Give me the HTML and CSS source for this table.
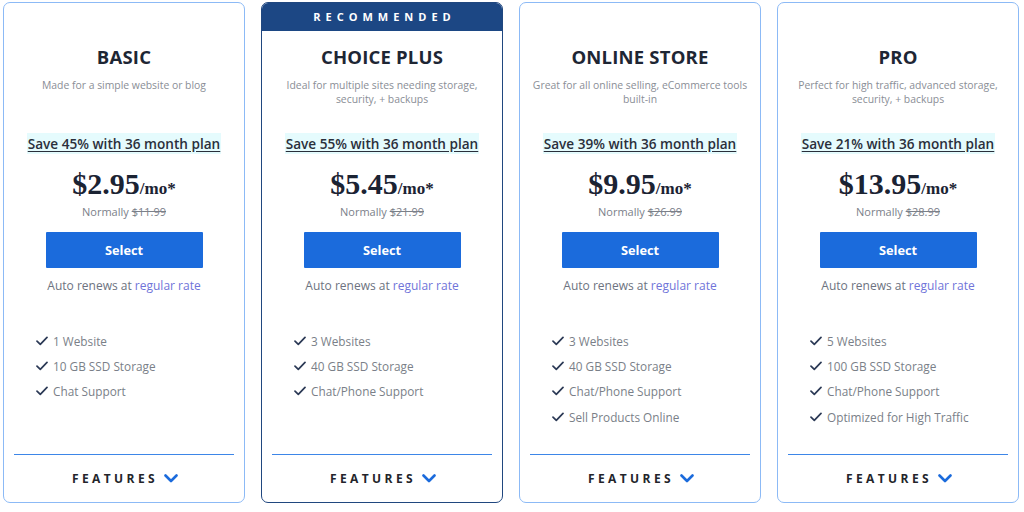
FILE: index.html
```html
<!DOCTYPE html>
<html lang="en">
<head>
<meta charset="utf-8">
<title>Plans</title>
<link rel="stylesheet" href="styles.css">
</head>
<body>
<svg width="0" height="0" style="position:absolute">
  <defs>
    <symbol id="check" viewBox="0 0 12 10"><path d="M1 5.2 L4.3 8.4 L11 1.4" fill="none" stroke="currentColor" stroke-width="1.7" stroke-linecap="round" stroke-linejoin="round"/></symbol>
    <symbol id="chev" viewBox="0 0 14 9"><path d="M1.5 1.5 L7 7 L12.5 1.5" fill="none" stroke="currentColor" stroke-width="2.6" stroke-linecap="round" stroke-linejoin="round"/></symbol>
  </defs>
</svg>
<main class="plans">
  <section class="card">
    <div class="ribbon"></div>
    <h2 class="title">BASIC</h2>
    <p class="desc">Made for a simple website or blog</p>
    <p class="save"><span>Save 45% with 36 month plan</span></p>
    <p class="price"><span class="amt">$2.95</span><span class="per">/mo*</span></p>
    <p class="normal">Normally <s>$11.99</s></p>
    <button class="select">Select</button>
    <p class="renew">Auto renews at <a>regular rate</a></p>
    <ul class="feats">
      <li><svg class="ck"><use href="#check"/></svg>1 Website</li>
      <li><svg class="ck"><use href="#check"/></svg>10 GB SSD Storage</li>
      <li><svg class="ck"><use href="#check"/></svg>Chat Support</li>
    </ul>
    <div class="foot"><span>FEATURES</span><svg class="chev"><use href="#chev"/></svg></div>
  </section>
  <section class="card rec">
    <div class="ribbon">RECOMMENDED</div>
    <h2 class="title">CHOICE PLUS</h2>
    <p class="desc">Ideal for multiple sites needing storage, security, + backups</p>
    <p class="save"><span>Save 55% with 36 month plan</span></p>
    <p class="price"><span class="amt">$5.45</span><span class="per">/mo*</span></p>
    <p class="normal">Normally <s>$21.99</s></p>
    <button class="select">Select</button>
    <p class="renew">Auto renews at <a>regular rate</a></p>
    <ul class="feats">
      <li><svg class="ck"><use href="#check"/></svg>3 Websites</li>
      <li><svg class="ck"><use href="#check"/></svg>40 GB SSD Storage</li>
      <li><svg class="ck"><use href="#check"/></svg>Chat/Phone Support</li>
    </ul>
    <div class="foot"><span>FEATURES</span><svg class="chev"><use href="#chev"/></svg></div>
  </section>
  <section class="card">
    <div class="ribbon"></div>
    <h2 class="title">ONLINE STORE</h2>
    <p class="desc">Great for all online selling, eCommerce tools built-in</p>
    <p class="save"><span>Save 39% with 36 month plan</span></p>
    <p class="price"><span class="amt">$9.95</span><span class="per">/mo*</span></p>
    <p class="normal">Normally <s>$26.99</s></p>
    <button class="select">Select</button>
    <p class="renew">Auto renews at <a>regular rate</a></p>
    <ul class="feats">
      <li><svg class="ck"><use href="#check"/></svg>3 Websites</li>
      <li><svg class="ck"><use href="#check"/></svg>40 GB SSD Storage</li>
      <li><svg class="ck"><use href="#check"/></svg>Chat/Phone Support</li>
      <li><svg class="ck"><use href="#check"/></svg>Sell Products Online</li>
    </ul>
    <div class="foot"><span>FEATURES</span><svg class="chev"><use href="#chev"/></svg></div>
  </section>
  <section class="card">
    <div class="ribbon"></div>
    <h2 class="title">PRO</h2>
    <p class="desc">Perfect for high traffic, advanced storage, security, + backups</p>
    <p class="save"><span>Save 21% with 36 month plan</span></p>
    <p class="price"><span class="amt">$13.95</span><span class="per">/mo*</span></p>
    <p class="normal">Normally <s>$28.99</s></p>
    <button class="select">Select</button>
    <p class="renew">Auto renews at <a>regular rate</a></p>
    <ul class="feats">
      <li><svg class="ck"><use href="#check"/></svg>5 Websites</li>
      <li><svg class="ck"><use href="#check"/></svg>100 GB SSD Storage</li>
      <li><svg class="ck"><use href="#check"/></svg>Chat/Phone Support</li>
      <li><svg class="ck"><use href="#check"/></svg>Optimized for High Traffic</li>
    </ul>
    <div class="foot"><span>FEATURES</span><svg class="chev"><use href="#chev"/></svg></div>
  </section>
</main>
</body>
</html>
```
FILE: styles.css
```css
* { box-sizing: border-box; }
html, body { margin: 0; padding: 0; background: #fff; }
body {
  font-family: "Open Sans", "Noto Sans", sans-serif;
  color: #1d2533;
}
.plans {
  display: flex;
  gap: 16px;
  padding: 2px 0 0 3px;
}
.card {
  width: 242px;
  height: 501px;
  border: 1px solid #8cbaf6;
  border-radius: 7px;
  display: flex;
  flex-direction: column;
  align-items: center;
  overflow: hidden;
}
.card.rec { border-color: #20477f; }
.ribbon {
  align-self: stretch;
  height: 28px;
  flex: none;
  color: #fff;
  font-weight: 700;
  font-size: 11px;
  letter-spacing: 5px;
  text-align: center;
  line-height: 28px;
  padding-left: 5px;
}
.rec .ribbon { background: #1c4784; }
.title {
  margin: 15px 0 0;
  font-size: 18.5px;
  line-height: 22px;
  font-weight: 700;
  color: #1e2634;
  letter-spacing: 0.2px;
}
.desc {
  margin: 10px 0 0;
  height: 28px;
  padding: 0 12px;
  font-size: 10.4px;
  line-height: 14px;
  color: #8a8e96;
  text-align: center;
}
.save {
  margin: 29px 0 0;
  font-size: 13.6px;
  line-height: 18px;
  font-weight: 600;
}
.save span {
  background: #e5fbfd;
  color: #2a2f3b;
  text-decoration: underline;
  text-underline-offset: 2px;
  padding: 1px 1px;
}
.price {
  margin: 16px 0 0;
  line-height: 30px;
  font-family: "Liberation Serif", serif;
  font-weight: 700;
  color: #1b2333;
}
.amt { font-size: 30px; }
.per { font-size: 17px; }
.normal {
  margin: 0;
  font-size: 11px;
  line-height: 16px;
  color: #7b8089;
}
.normal s { color: #7b8089; }
.select {
  margin: 12px 0 0;
  width: 157px;
  height: 36px;
  border: none;
  border-radius: 1px;
  background: #1b6bdc;
  color: #fff;
  font-family: inherit;
  font-weight: 700;
  font-size: 12.8px;
}
.renew {
  margin: 10px 0 0;
  font-size: 12px;
  line-height: 16px;
  color: #6d7380;
}
.renew a { color: #6f74d9; }
.feats {
  list-style: none;
  margin: 34px 0 0;
  padding: 0 0 0 32px;
  align-self: stretch;
}
.feats li {
  display: flex;
  align-items: center;
  height: 25.4px;
  font-size: 11.8px;
  color: #7a7f88;
}
.ck {
  width: 12px;
  height: 10px;
  color: #2c3a56;
  margin-right: 5px;
  flex: none;
}
.foot {
  margin-top: auto;
  align-self: stretch;
  margin-left: 10px;
  margin-right: 10px;
  border-top: 1.5px solid #3d86e8;
  height: 48px;
  display: flex;
  justify-content: center;
  align-items: center;
  gap: 6px;
  padding-left: 2px;
  font-weight: 700;
  font-size: 12px;
  letter-spacing: 3.4px;
  color: #23252b;
}
.chev {
  width: 14px;
  height: 9px;
  color: #1b6bdc;
}
```
